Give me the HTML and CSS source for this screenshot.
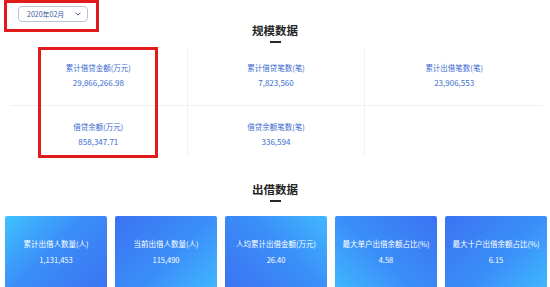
FILE: index.html
```html
<!DOCTYPE html>
<html lang="zh">
<head>
<meta charset="utf-8">
<link rel="stylesheet" href="styles.css">
</head>
<body>
<div class="page">
  <div class="header">
    <div class="picker"><span>2020年02月</span>
      <svg class="chev" width="6" height="4" viewBox="0 0 6 4"><path d="M0.5 0.6 L3 3.1 L5.5 0.6" fill="none" stroke="#4a5d8c" stroke-width="1"/></svg>
    </div>
    <div class="title">规模数据</div>
    <div></div>
  </div>

  <div class="scale">
    <div class="cell r1"><div class="lbl">累计借贷金额(万元)</div><div class="val">29,866,266.98</div></div>
    <div class="cell r1"><div class="lbl">累计借贷笔数(笔)</div><div class="val">7,823,560</div></div>
    <div class="cell r1 last"><div class="lbl">累计出借笔数(笔)</div><div class="val">23,906,553</div></div>
    <div class="cell r2"><div class="lbl">借贷余额(万元)</div><div class="val">858,347.71</div></div>
    <div class="cell r2"><div class="lbl">借贷余额笔数(笔)</div><div class="val">336,594</div></div>
    <div class="cell r2 last"></div>
  </div>

  <div class="title title2">出借数据</div>

  <div class="cards">
    <div class="card g1"><div class="clbl">累计出借人数量(人)</div><div class="cval">1,131,453</div></div>
    <div class="card g2"><div class="clbl">当前出借人数量(人)</div><div class="cval">115,490</div></div>
    <div class="card g3"><div class="clbl">人均累计出借金额(万元)</div><div class="cval">26.40</div></div>
    <div class="card g4"><div class="clbl">最大单户出借余额占比(%)</div><div class="cval">4.58</div></div>
    <div class="card g2"><div class="clbl">最大十户出借余额占比(%)</div><div class="cval">6.15</div></div>
  </div>

  <div class="mark mark1"></div>
  <div class="mark mark2"></div>
</div>
</body>
</html>
```
FILE: styles.css
```css
html, body {
  margin: 0;
  padding: 0;
  background: #fff;
}
.page {
  position: relative;
  width: 550px;
  height: 287px;
  overflow: hidden;
  font-family: "Noto Sans CJK SC", "Noto Sans", sans-serif;
}
.header {
  display: grid;
  grid-template-columns: 1fr auto 1fr;
  align-items: start;
  height: 47px;
}
.picker {
  justify-self: start;
  margin: 6px 0 0 18px;
  width: 70px;
  height: 16px;
  box-sizing: border-box;
  border: 1px solid #b8c5dc;
  border-radius: 4px;
  display: flex;
  align-items: center;
  justify-content: space-between;
  padding: 0 6px 0 8px;
  font-size: 7px;
  color: #34579f;
  line-height: 1;
}
.chev { display: block; }
.title {
  margin-top: 24px;
  text-align: center;
  font-size: 11.5px;
  font-weight: 700;
  color: #262626;
  line-height: 12px;
}
.title::after {
  content: "";
  display: block;
  width: 11px;
  height: 2px;
  margin: 5px auto 0;
  background: #262626;
}
.title2 {
  margin-top: 27px;
}
.scale {
  display: grid;
  grid-template-columns: repeat(3, 1fr);
  margin: 0 7px 0 10px;
}
.cell {
  display: flex;
  flex-direction: column;
  align-items: center;
  border-right: 1px solid #f0f1f4;
  box-sizing: border-box;
}
.cell.last { border-right: none; }
.r1 {
  height: 59px;
  padding-top: 15px;
  border-bottom: 1px solid #eef0f4;
}
.r2 {
  height: 50px;
  padding-top: 15px;
}
.lbl, .val {
  font-size: 7.5px;
  line-height: 12px;
  color: #3a6bd0;
}
.val {
  font-size: 8px;
  margin-top: 3px;
}
.cards {
  display: flex;
  gap: 8px;
  padding-left: 5px;
  margin-top: 14px;
}
.card {
  width: 102px;
  height: 74px;
  flex: none;
  border-radius: 2px;
  display: flex;
  flex-direction: column;
  align-items: center;
  justify-content: center;
  gap: 4px;
  padding-bottom: 3px;
  box-sizing: border-box;
  color: #fff;
}
.clbl, .cval {
  font-size: 7.5px;
  line-height: 12px;
}
.g1 { background: linear-gradient(135deg, #3fc2ff 0%, #3b8ef8 45%, #3b73f3 100%); }
.g2 { background: linear-gradient(135deg, #3b73f3 0%, #3b8ef8 55%, #3fb8ff 100%); }
.g3 { background: linear-gradient(45deg, #3b73f3 0%, #3b8ef8 55%, #3fb8ff 100%); }
.g4 { background: linear-gradient(45deg, #3fb8ff 0%, #3b8ef8 45%, #3b73f3 100%); }
.mark {
  position: absolute;
  border: 3px solid #e11b1b;
  box-sizing: border-box;
}
.mark1 {
  left: 4px;
  top: 0;
  width: 95px;
  height: 32px;
}
.mark2 {
  left: 38px;
  top: 47px;
  width: 120px;
  height: 111px;
}
```
